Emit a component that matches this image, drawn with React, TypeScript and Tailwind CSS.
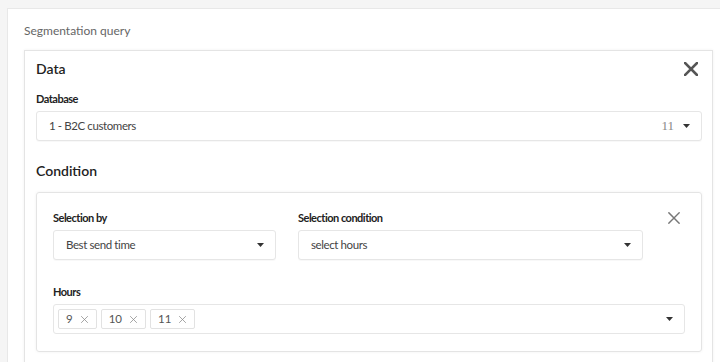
import { ReactNode } from 'react';

const font = { fontFamily: 'Lato, "Noto Sans", sans-serif' };

function Caret() {
    return (
        <svg width="7" height="4" viewBox="0 0 7 4" className="shrink-0">
            <path d="M0 0h7L3.5 4z" fill="#333" />
        </svg>
    );
}

function XIcon({ size, stroke, color }: { size: number; stroke: number; color: string }) {
    return (
        <svg width={size} height={size} viewBox="0 0 14 14">
            <path d="M1 1l12 12M13 1L1 13" stroke={color} strokeWidth={stroke} strokeLinecap="square" />
        </svg>
    );
}

function Label({ children }: { children: ReactNode }) {
    return <div className="text-[11px] leading-[14px] font-bold tracking-[-0.5px] text-[#222]">{children}</div>;
}

function Select({ value, width, right }: { value?: string; width: string; right?: ReactNode }) {
    return (
        <div className={`${width} h-[30px] flex items-center justify-between pl-[12px] pr-[11px] bg-white border border-[#e6e6e6] rounded-[3px] shadow-[0_1px_1px_rgba(0,0,0,0.03)]`}>
            <span className="text-[11.5px] tracking-[-0.4px] text-[#444]">{value}</span>
            <div className="flex items-center gap-[9px]">
                {right}
                <Caret />
            </div>
        </div>
    );
}

function Tag({ label }: { label: string }) {
    return (
        <div className="h-[20px] flex items-center gap-[8px] pl-[7px] pr-[8px] border border-[#e2e2e2] rounded-[2px] text-[11.5px] text-[#555]">
            {label}
            <XIcon size={7} stroke={1.5} color="#888" />
        </div>
    );
}

export default function App() {
    return (
        <div className="h-[362px] overflow-hidden bg-[#f5f5f5] pt-2 pl-[7px]" style={font}>
            <div className="w-[730px] bg-white border border-[#e8e8e8] pl-4 pt-[14px]">
                <div className="text-[12px] leading-[16px] text-[#666]">Segmentation query</div>

                <div className="mt-[11px] w-[689px] border border-[#e4e4e4] shadow-[0_0_3px_rgba(0,0,0,0.06)] pl-[11px] pr-[10px] pt-[8px] pb-6">
                    <div className="flex items-center justify-between pr-[4px]">
                        <div className="text-[14px] leading-[20px] font-semibold text-[#222]">Data</div>
                        <XIcon size={14} stroke={2.6} color="#555" />
                    </div>

                    <div className="mt-[13px]">
                        <Label>Database</Label>
                    </div>
                    <div className="mt-[5px]">
                        <Select
                            value="1 - B2C customers"
                            width="w-full"
                            right={<span className="text-[13px] text-[#8a8a8a]" style={{ fontFamily: '"Liberation Serif", serif' }}>11</span>}
                        />
                    </div>

                    <div className="mt-[20px] text-[14px] leading-[20px] font-semibold text-[#222]">Condition</div>

                    <div className="mt-[11px] border border-[#e4e4e4] rounded-[3px] shadow-[0_0_3px_rgba(0,0,0,0.06)] pl-4 pr-4 pt-[18px] pb-[17px]">
                        <div className="flex items-start">
                            <div className="w-[223px]">
                                <Label>Selection by</Label>
                                <div className="mt-[5px]">
                                    <Select value="Best send time" width="w-full" />
                                </div>
                            </div>
                            <div className="w-[345px] ml-[22px]">
                                <Label>Selection condition</Label>
                                <div className="mt-[5px]">
                                    <Select value="select hours" width="w-full" />
                                </div>
                            </div>
                            <div className="ml-[25px] mt-[1px]">
                                <XIcon size={12} stroke={1.7} color="#777" />
                            </div>
                        </div>

                        <div className="mt-[25px]">
                            <Label>Hours</Label>
                        </div>
                        <div className="mt-[5px] h-[30px] flex items-center justify-between pl-[4px] pr-[11px] bg-white border border-[#e6e6e6] rounded-[3px]">
                            <div className="flex items-center gap-[4px]">
                                <Tag label="9" />
                                <Tag label="10" />
                                <Tag label="11" />
                            </div>
                            <Caret />
                        </div>
                    </div>
                </div>
            </div>
        </div>
    );
}
